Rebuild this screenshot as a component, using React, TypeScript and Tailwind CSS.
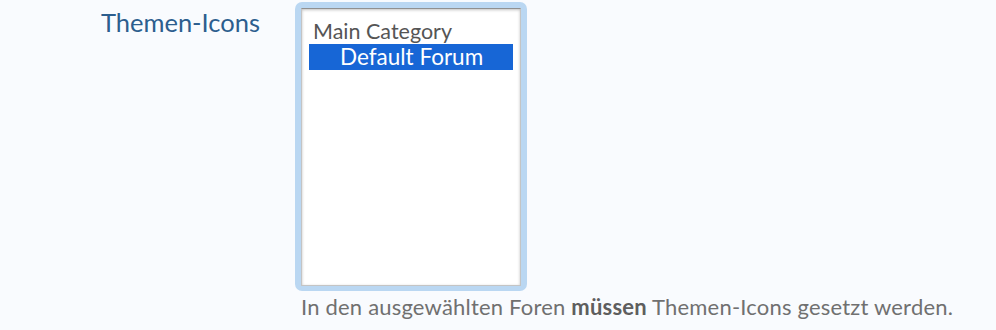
import React from "react";

export default function App() {
  return (
    <div className="h-[330px] w-[996px] bg-[#f9fbfe] font-['Lato','Liberation_Sans',sans-serif]">
      <div className="flex pt-[2px]">
        <div className="w-[260px] shrink-0 pt-[4px] text-right text-[25.5px] leading-[32px] text-[#2c5e8e]">
          Themen-Icons
        </div>
        <div className="ml-[35px] flex flex-col">
          <div className="w-[232px] rounded-[7px] bg-[#bad7f2] pt-[6px] pr-[6px] pb-[5px] pl-[6px]">
            <div className="h-[278px] border border-[#c4c4c4] border-t-[#909090] bg-white px-[7px] pt-[9px] shadow-[inset_0_1px_3px_rgba(0,0,0,0.25)]">
              <div className="pl-[4px] text-[21.5px] leading-[26px] text-[#555555]">Main Category</div>
              <div className="h-[26px] bg-[#1766d6] pl-[31px] text-[22.5px] leading-[26px] text-white">Default Forum</div>
            </div>
          </div>
          <p className="ml-[6px] mt-[3px] whitespace-nowrap text-[22px] leading-[26px] tracking-[0.2px] text-[#707070]">
            In den ausgewählten Foren <b className="font-bold text-[#5e5e5e]">müssen</b> Themen-Icons gesetzt werden.
          </p>
        </div>
      </div>
    </div>
  );
}
